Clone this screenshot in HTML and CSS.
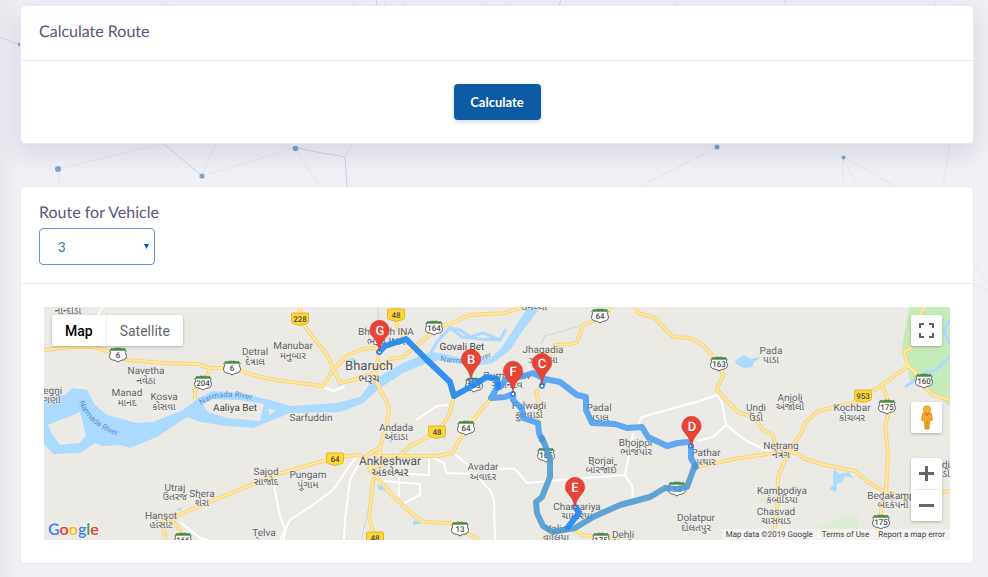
FILE: index.html
```html
<!DOCTYPE html>
<html lang="en">
<head>
<meta charset="utf-8">
<title>Calculate Route</title>
<link rel="stylesheet" href="styles.css">
</head>
<body>
<svg class="particles" width="988" height="577" viewBox="0 0 988 577" aria-hidden="true">
  <g class="faint">
    <path d="M58 169L165 143M58 169l2 17M202 176l14-33M202 176l93-28 24 38M345 157l8-15M166 6l4-8M352 0l4 6M385 0v6M403 6l3-8M486 6l4-8M503 0l5 6M676 0v6M935 0v6M641 186l76-39M843 157l52 29M843 157v25M843 157l12 25M950 145l-7 41M974 263l14 20M974 285l14 5"/>
  </g>
  <g class="strong">
    <path d="M0 37l20 8M164 144l38 32M295 148l50 9 2 29M376 0l1 6M561 0l-2 6M785 0v3"/>
  </g>
  <g class="dots">
    <circle cx="58" cy="169" r="3"/><circle cx="202" cy="176" r="2.6"/><circle cx="295.500" cy="148.500" r="2.800"/><circle cx="717" cy="147" r="2.500"/><circle cx="843.500" cy="157.500" r="2"/><circle cx="20" cy="44.500" r="2"/>
  </g>
</svg>
<main class="page">
  <section class="card raised">
    <header class="card-header"><h2 class="card-title">Calculate Route</h2></header>
    <div class="card-body actions"><button class="primary" type="button">Calculate</button></div>
  </section>

  <section class="card">
    <header class="card-header">
      <label class="card-title" for="vehicle">Route for Vehicle</label>
      <div class="select-wrap">
        <select id="vehicle"><option>3</option></select>
      </div>
    </header>
    <div class="card-body">
      <div class="map">
        <svg class="map-canvas" viewBox="44 307 906 233" preserveAspectRatio="xMidYMid slice" role="img" aria-label="Route map">
          <defs>
            <g id="shield">
              <path d="M-6.500-6.500q1.500 1 3.200 0q1.600-.8 3.300 0q1.700-.8 3.300 0q1.700 1 3.200 0l1.500 2q-1.400 2 .3 4.500q.8 3.500-2.500 4.800q-3.300.2-5.800 2.200q-2.500-2-5.800-2.200q-3.300-1.300-2.500-4.800q1.700-2.500.3-4.500z" fill="#fff" stroke="#5c6166" stroke-width="1"/>
              <path d="M-6.500-6.500q1.500 1 3.200 0q1.600-.8 3.300 0q1.700-.8 3.300 0q1.700 1 3.200 0l1.200 2.300h-15.400z" fill="#45933b"/>
            </g>
            <path id="badge" d="M-7.500-6h15q1 0 1 1v7.500q0 1.500-1.500 2l-7 2-7-2q-1.500-.5-1.500-2v-7.500q0-1 1-1z" fill="#fdd835" stroke="#e2a814" stroke-width=".8"/>
            <path id="pin" d="M0 0C-1-7.500-2.800-10-6-14.200C-8.300-17-9.700-18.800-9.700-22A9.700 9.700 0 0 1 9.700-22C9.700-18.800 8.300-17 6-14.200C2.800-10 1-7.500 0 0Z" fill="#ea4335" stroke="#c5352b" stroke-width=".5"/>
            <path id="narmada-w" d="M79 402Q87 425 118 436"/>
            <path id="narmada-m" d="M201 405Q220 392 252 400"/>
            <path id="narmada-e" d="M440 361Q468 367 494 356"/>
          </defs>

          <rect x="0" y="250" width="1000" height="350" fill="#ebeae5"/>
          <path fill="#c5ecb8" d="M909 307L902 347 908 367 909 380 922 387 950 406V307z"/>
          <path fill="#dcefd5" d="M818 527l22-9 18-3v17h-40zM757 478l8-2-1 4zM757 498l14 2-4 4z"/>

          <g fill="#aadaff">
            <path d="M44 398L65 395 73 388 87 390 95 405 107 415 137 423 153 422 183 410 200 397 213 391 240 393 270 400 290 406 337 403 360 397 373 380 403 363 430 352 440 353 470 360 490 359 502 347 515 327 528 307H541L523 330 510 350 493 363 473 366 440 360 427 363 403 373 380 388 363 403 340 412 290 413 273 420 253 428 227 426 200 422 187 417 157 437 130 448 120 445 103 446 95 443 80 453 53 454 44 444z"/>
            <path d="M735 361l9-6 7 4 10-2-7 5-2 5-8 1-8-4zM833 470l3 1 4 3 9-2 4 6-8-2-3 6-5 2-1 8-7-3 4-4zM377 484l7 3 2 4-7-1zM413 521l6-1 2 4-8 1zM388 440l5 0-2 3zM177 509l6-2-4 4zM443 437h3l-1 3zM350 358h5v4h-8z"/>
          </g>
          <g fill="#ebeae5">
            <path d="M48 425L80 412 86 435 80 443 60 445 52 434zM203 405L210 399 240 400 264 404 260 421 227 418 208 412zM268 409L276 410 270 415z"/>
          </g>
          <g fill="none" stroke="#aadaff" stroke-width="3">
            <path d="M429 356L437 342 450 328 460 330 470 337 483 333 500 340 506 329M450 328L462 337 480 339 500 340M905 387L925 373 935 371 950 356M950 345L944 330 950 320"/>
          </g>

          <g class="minor">
            <path d="M280 540L290 520 310 507 333 490 350 465 358 455M362 458L350 480 345 520 344 540M273 480L279 512 285 530 284 540M376 478L383 481 420 484M399 477V497M429 456V475L405 474M420 484V495L404 503M430 456L444 463 446 473 475 474 490 490 494 500 495 540M455 454L470 467 505 469M416 420L437 406 449 405M500 468L515 469 527 483 560 480 625 475 633 433M625 475L632 486 633 500M638 425L642 417 685 405 700 401 717 395M717 395L722 403 726 425 745 440 765 450 780 454M103 307L96 317M322 387L334 391 345 386M697 441L713 437 726 425M180 522L200 538 208 540"/>
          </g>
          <g class="rail"><path d="M541 344L545 336 583 325M362 537L375 480M378 307L379 350"/></g>

          <g class="road-edge">
            <path id="roads" d="M44 350L73 347H93L118 354 127 360 163 363 197 364 210 368H232L253 375 275 380 323 386 333 370 348 355 363 349 378 348M299 307L303 324 327 355 340 383 353 380 370 375 390 359 403 357 427 337 437 327 450 324 470 315 505 313 526 306M395 307L396 320 398 330 406 339M210 368L207 378 195 390V399M379 352L375 377 377 383 389 407 387 425 380 447 377 477 373 480 369 517 376 540M275 475L323 461 337 457 358 455 365 458 370 470 377 477 390 493 413 515 423 522 450 523 470 535 480 540M275 475L173 517 163 521 173 522 179 528 182 540M162 521L166 540M365 457L380 447M373 456H437L453 453 458 442 477 415 491 398M454 396L449 415 438 432 410 446 400 455M370 468L388 464M612 307L600 318 583 325 577 342 572 344 555 345 552 357M542 385L536 393 539 403V423M635 307L638 313 655 318 673 337 690 338 703 345 718 362 723 375 717 390 738 412 755 418 763 430 773 435 775 443 780 452M925 307L917 320M912 347L904 352 908 366 882 385 852 403 818 411 805 423 800 435 788 452 778 477 777 513 773 540M908 366L915 372 922 385 933 395 950 400M882 385L887 398 889 413 885 425 888 453 886 492 882 503 880 520 876 540M695 467L740 458 780 452 797 453 805 459 825 465 855 471 868 482 885 492 908 498 950 491M542 540L553 532M575 530L583 535 607 538 618 540"/>
          </g>
          <use href="#roads" class="road-core"/>

          <g class="shields">
            <use href="#shield" x="118" y="355"/><use href="#shield" x="232" y="368"/><use href="#shield" x="203" y="383"/><use href="#shield" x="434" y="328"/><use href="#shield" x="474" y="385"/><use href="#shield" x="466" y="428"/><use href="#shield" x="460" y="529"/><use href="#shield" x="600" y="316"/><use href="#shield" x="719" y="364"/><use href="#shield" x="546" y="455"/><use href="#shield" x="677" y="489"/><use href="#shield" x="924" y="381"/><use href="#shield" x="887" y="407"/><use href="#shield" x="881" y="522"/><use href="#shield" x="183" y="540"/><use href="#shield" x="601" y="540"/>
            <use href="#badge" x="300" y="319"/><use href="#badge" x="396" y="315"/><use href="#badge" x="437" y="432"/><use href="#badge" x="335" y="459"/><use href="#badge" x="375" y="538"/><use href="#badge" x="863" y="396"/>
            <g class="num">
              <text x="118" y="358">6</text><text x="232" y="371">6</text><text x="203" y="386">204</text><text x="434" y="331">164</text><text x="474" y="388">163</text><text x="466" y="431">64</text><text x="460" y="532">13</text><text x="600" y="319">64</text><text x="719" y="367">163</text><text x="546" y="458">165</text><text x="677" y="492">13</text><text x="924" y="384">160</text><text x="887" y="410">175</text><text x="881" y="525">175</text><text x="183" y="543">166</text><text x="601" y="543">175</text><text x="300" y="322">228</text><text x="396" y="318">48</text><text x="437" y="435">48</text><text x="335" y="462">64</text><text x="375" y="541">48</text><text x="863" y="399">953</text>
            </g>
          </g>

          <g class="river-names">
            <text><textPath href="#narmada-w">Narmada River</textPath></text>
            <text><textPath href="#narmada-m">Narmada River</textPath></text>
            <text><textPath href="#narmada-e">Narmada River</textPath></text>
          </g>

          <g class="places">
            <text x="68" y="314">નાન્દીડા</text>
            <text x="255" y="355">Detral</text><text x="255" y="365">દેત્રાલ</text>
            <text x="293" y="349">Manubar</text><text x="293" y="359">મનુબાર</text>
            <text x="146" y="374">Navetha</text><text x="146" y="384">નવેઠા</text>
            <text x="127" y="396">Manad</text><text x="127" y="406">માનદ</text>
            <text x="164" y="400">Kosva</text><text x="164" y="410">કોસવા</text>
            <text x="52" y="394">'egni</text><text x="52" y="403">ગણી</text>
            <text x="311" y="421">Sarfuddin</text>
            <text x="386" y="335">Bharuch INA</text><text x="386" y="345">ભરૂચ INA</text>
            <text x="396" y="431">Andada</text><text x="396" y="440">અંદાડા</text>
            <text x="308" y="478">Pungam</text><text x="308" y="488">પુંગામ</text>
            <text x="266" y="475">Sajod</text><text x="266" y="485">સાજોદ</text>
            <text x="175" y="491">Utraj</text><text x="175" y="500">ઉતરજ</text>
            <text x="202" y="497">Shera</text><text x="202" y="506">શેરા</text>
            <text x="161" y="519">Hansot</text><text x="161" y="528">હાંસોટ</text>
            <text x="264" y="536">Telva</text><text x="264" y="546">તેલવા</text>
            <text x="483" y="470">Avadar</text><text x="483" y="480">અવાદર</text>
            <text x="543" y="353">Jhagadia</text><text x="543" y="363">ઝગડિયા</text>
            <text x="534" y="310">ઉમલ્લા</text>
            <text x="507" y="379">Gumandev</text><text x="507" y="388">ગુમાનદેવ</text>
            <text x="529" y="409">Fulwadi</text><text x="529" y="418">ફુલવાડી</text>
            <text x="599" y="411">Padal</text><text x="599" y="421">પડાલ</text>
            <text x="636" y="446">Bhojpor</text><text x="636" y="455">ભોજપોર</text>
            <text x="601" y="464">Borjai</text><text x="601" y="473">બોરજાઈ</text>
            <text x="706" y="456">Pathar</text><text x="706" y="465">પથાર</text>
            <text x="577" y="510">Chamariya</text><text x="577" y="519">ચામરિયા</text>
            <text x="556" y="532">Valia</text><text x="556" y="541">વાલિયા</text>
            <text x="623" y="538">Dehli</text><text x="623" y="548">દેહલી</text>
            <text x="696" y="521">Dolatpur</text><text x="696" y="531">દોલતપુર</text>
            <text x="771" y="354">Pada</text><text x="771" y="363">પાડા</text>
            <text x="790" y="401">Anjoli</text><text x="790" y="410">અંજોલી</text>
            <text x="756" y="411">Undi</text><text x="756" y="421">ઉંડી</text>
            <text x="852" y="411">Kochbar</text><text x="852" y="421">કોચબર</text>
            <text x="781" y="449">Netrang</text><text x="781" y="458">નેત્રંગ</text>
            <text x="782" y="494">Kambodiya</text><text x="782" y="503">કંબોડિયા</text>
            <text x="776" y="515">Chasvad</text><text x="776" y="524">ચાસવાડ</text>
            <text x="891" y="499">Bedakamp</text><text x="893" y="508">બેદકંપની</text>
            <text x="946" y="468">di</text><text x="946" y="477">ડી</text>
            <g class="dark"><text x="235" y="411">Aaliya Bet</text><text x="462" y="350">Govali Bet</text></g>
            <g class="city"><text x="369" y="370">Bharuch</text><text class="local" x="369" y="382">ભરૂચ</text><text class="mid" x="390" y="465">Ankleshwar</text><text class="local" x="390" y="476">અંકલેશ્વર</text></g>
          </g>

          <g class="route">
            <g class="pale"><path d="M498 386L491 398 505 397 513 394M500 387L505 380 523 376 533 373 545 379 560 382 577 395 586 397V410L592 423 615 424 627 428 642 427 648 437 667 446 678 443 688 442M513 395V400L522 409 523 418 538 423 539 433 542 440M691 447V458L696 467M542 385L545 379"/></g>
            <g class="muted"><path d="M542 438L545 445 550 460V477L542 497 536 502 537 513 543 526 553 532 563 530 575 528 593 517 620 505 650 497 665 488 677 489 687 487 695 465"/></g>
            <g class="vivid"><path d="M379 352L385 346 406 339 427 360 450 382 454 396 470 387 487 377 497 379 498 387M576 508L579 513 568 527"/></g>
          </g>
          <g fill="#fff" stroke="#1e80f0" stroke-width="1.500"><circle cx="379.500" cy="352" r="2"/><circle cx="471" cy="380" r="2"/><circle cx="542" cy="386" r="2"/><circle cx="513" cy="394" r="2"/><circle cx="691" cy="446" r="2"/><circle cx="575" cy="507" r="2"/></g>
          <g class="pins">
            <use href="#pin" x="379.500" y="352"/><use href="#pin" x="471" y="381"/><use href="#pin" x="542" y="385"/><use href="#pin" x="513" y="393"/><use href="#pin" x="691.500" y="448"/><use href="#pin" x="575" y="509"/>
            <text x="380" y="335">G</text><text x="471" y="364">B</text><text x="542" y="368">C</text><text x="513" y="376">F</text><text x="692" y="431">D</text><text x="575" y="492">E</text>
          </g>
          <text class="logo" x="48" y="535"><tspan fill="#4285f4">G</tspan><tspan fill="#ea4335">o</tspan><tspan fill="#fbbc05">o</tspan><tspan fill="#4285f4">g</tspan><tspan fill="#34a853">l</tspan><tspan fill="#ea4335">e</tspan></text>
        </svg>

        <div class="map-types control">
          <button class="selected" type="button">Map</button>
          <button type="button">Satellite</button>
        </div>
        <button class="fullscreen control" type="button" aria-label="Toggle fullscreen view">
          <svg width="15" height="15" viewBox="0 0 15 15"><path d="M1 5V1h4M10 1h4v4M14 10v4h-4M5 14H1v-4" fill="none" stroke="#666" stroke-width="2"/></svg>
        </button>
        <div class="side">
          <button class="control pegman" type="button" aria-label="Street View">
            <svg width="16" height="25" viewBox="0 0 16 25"><path d="M4 8q4-2 8 0l1.500 7-1.500 1-1.200-3L10 24H6L5.200 13 4 16l-1.500-1z" fill="#f9a825" stroke="#d58a13" stroke-width=".8"/><circle cx="8" cy="4.500" r="3.800" fill="#fbb12f" stroke="#d58a13" stroke-width=".6"/><path d="M5 8l3 3 3-3q-3 1.500-6 0z" fill="#e06b26"/><path d="M8 15v9" stroke="#d58a13"/></svg>
          </button>
          <div class="control zoom">
            <button type="button" aria-label="Zoom in"><svg width="15" height="15" viewBox="0 0 15 15"><path d="M7.500 0v15M0 7.500h15" stroke="#666" stroke-width="3"/></svg></button>
            <button type="button" aria-label="Zoom out"><svg width="15" height="15" viewBox="0 0 15 15"><path d="M0 7.500h15" stroke="#666" stroke-width="3"/></svg></button>
          </div>
        </div>
        <div class="credits"><span>Map data ©2019 Google</span><a href="#terms">Terms of Use</a><a href="#report">Report a map error</a></div>
      </div>
    </div>
  </section>
</main>
</body>
</html>
```
FILE: styles.css
```css
* { box-sizing: border-box; }
body {
  margin: 0;
  min-height: 100vh;
  background: linear-gradient(90deg, #e9e8ef, #f0f0f6 20px) #f0f0f6;
  color: #595480;
  font-family: Lato, "Open Sans", sans-serif;
  text-rendering: geometricPrecision;
}
button, select { font: inherit; }
button { cursor: pointer; }

.particles { position: absolute; top: 0; left: 0; z-index: -1; fill: none; }
.faint { stroke: #e4e5ee; }
.strong { stroke: #c6d6e8; }
.dots { fill: #7aa3d0; }

.page {
  display: flex;
  flex-direction: column;
  gap: 42px;
  padding: 5px 14px 13px 20px;
}
.card {
  background: #fff;
  border: 1px solid #e8e8ee;
  border-radius: 5px;
}
.raised { box-shadow: 0 8px 24px rgba(50, 45, 80, .14); }
.card-header {
  padding: 16px 18px 18px;
  border-bottom: 1px solid #ebebed;
}
.card-title {
  display: block;
  margin: 0;
  font-size: 16px;
  font-weight: 400;
  line-height: 20px;
}
.card-body { padding: 23px; }
.actions { display: flex; justify-content: center; }
.primary {
  width: 87px;
  height: 36px;
  padding: 0;
  border: 0;
  border-radius: 4px;
  background: #0d5ba5;
  color: #fff;
  font-size: 13px;
  font-weight: 700;
  box-shadow: 0 2px 4px rgba(20, 90, 120, .22);
}
.select-wrap { position: relative; width: 116px; margin-top: 5px; }
.select-wrap::after {
  content: "";
  position: absolute;
  top: 16px;
  right: 6px;
  width: 5px;
  height: 5px;
  background: #0d5ba5;
  clip-path: polygon(0 0, 100% 0, 50% 100%);
  pointer-events: none;
}
select {
  display: block;
  appearance: none;
  width: 100%;
  height: 37px;
  padding: 0 18px;
  border: 1px solid #5f95cb;
  border-radius: 4px;
  background: #fff;
  color: #2d70b3;
  font-size: 13px;
}

.map {
  position: relative;
  height: 233px;
  overflow: hidden;
  font-family: Roboto, sans-serif;
}
.map-canvas { display: block; width: 100%; height: 100%; }
.minor, .rail, .road-edge, .road-core, .route { fill: none; stroke-linejoin: round; }
.minor { stroke: #fff; stroke-width: 2; }
.rail { stroke: #d5d5d5; }
.road-edge { stroke: #f6d583; stroke-width: 4; }
.road-core { stroke: #ffe9a0; stroke-width: 2; }
.route { stroke-width: 6; stroke-linecap: round; }
.pale { stroke: rgba(70, 155, 243, .85); }
.muted { stroke: rgba(75, 151, 209, .88); }
.vivid { stroke: rgba(35, 136, 240, .92); }
.places, .num, .pins { text-anchor: middle; }
.places {
  fill: #5c6066;
  font-family: Roboto, "Noto Sans Gujarati", sans-serif;
  font-size: 10px;
  stroke: #f3f2ef;
  stroke-width: 1;
  paint-order: stroke;
}
.dark { fill: #3f4246; }
.city { fill: #4f5256; font-size: 13px; }
.city .mid { font-size: 12px; }
.city .local { font-size: 11px; }
.num { fill: #4a4a4a; font-size: 8px; font-weight: 500; }
.river-names { fill: #5b8fce; font-size: 8px; }
.pins text { fill: #fff; font-size: 13px; font-weight: 500; }
.logo {
  font-family: Lato, sans-serif;
  font-size: 16px;
  font-weight: 700;
  stroke: #fff;
  stroke-width: 1;
  paint-order: stroke;
}

.control {
  padding: 0;
  border: 0;
  border-radius: 2px;
  background: #fff;
  box-shadow: 0 1px 3px rgba(0, 0, 0, .25);
}
.map-types { position: absolute; top: 8px; left: 8px; display: flex; height: 31px; }
.map-types button {
  padding: 0 13px;
  border: 0;
  border-left: 1px solid #eee;
  background: none;
  color: #666;
  font-size: 14px;
}
.map-types .selected { border-left: 0; color: #000; font-weight: 500; }
.fullscreen { position: absolute; top: 8px; right: 8px; width: 31px; height: 31px; }
.fullscreen, .pegman, .zoom button { display: grid; place-items: center; }
.side {
  position: absolute;
  right: 8px;
  bottom: 19px;
  display: flex;
  flex-direction: column;
  gap: 25px;
  width: 31px;
}
.pegman { height: 31px; }
.zoom { display: flex; flex-direction: column; }
.zoom button { height: 31px; padding: 0; border: 0; background: none; }
.zoom button + button { border-top: 1px solid #e6e6e6; margin: 0 4px; height: 32px; }
.credits {
  position: absolute;
  right: 0;
  bottom: 0;
  display: flex;
  gap: 9px;
  padding: 0 5px 0 4px;
  background: rgba(245, 245, 245, .75);
  color: #444;
  font-size: 8px;
  line-height: 11px;
}
.credits a { color: inherit; text-decoration: none; }
```
